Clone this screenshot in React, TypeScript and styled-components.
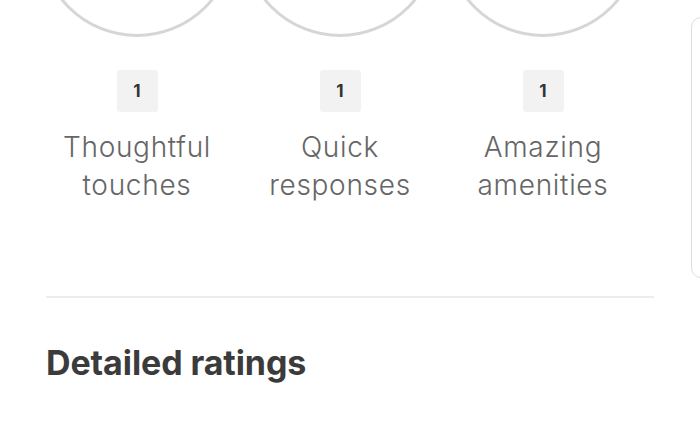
import React from 'react'
import styled, { createGlobalStyle } from 'styled-components'

const GlobalStyle = createGlobalStyle`
  html, body {
    margin: 0;
    padding: 0;
    background: #fff;
    overflow: hidden;
  }
  body {
    font-family: Inter, 'Noto Sans', sans-serif;
  }
`

const Page = styled.div`
  display: flex;
  align-items: flex-start;
  width: 700px;
  height: 437px;
  overflow: hidden;
`

const Main = styled.main`
  width: 608px;
  margin-left: 46px;
  flex-shrink: 0;
`

const Highlights = styled.div`
  display: grid;
  grid-template-columns: repeat(3, 203px);
  margin: -159px 0 0 -10.5px;
`

const Highlight = styled.div`
  display: flex;
  flex-direction: column;
  align-items: center;
`

const Circle = styled.div`
  width: 190px;
  height: 190px;
  border: 3px solid #d6d6d6;
  border-radius: 50%;
  display: flex;
  align-items: flex-end;
  justify-content: center;
  box-sizing: content-box;
  overflow: hidden;
`

const IconTip = styled.div`
  width: 12px;
  height: 4px;
  margin-bottom: 34px;
  border-radius: 0 0 6px 6px;
  background: #222;
`

const Badge = styled.div`
  margin-top: 33px;
  width: 41px;
  height: 42px;
  border-radius: 3px;
  background: #f2f2f2;
  display: flex;
  align-items: center;
  justify-content: center;
  font: 700 17px/1 Inter, sans-serif;
  color: #333;
`

const Label = styled.div`
  margin-top: 16px;
  text-align: center;
  font: 300 28px/38px Inter, 'Noto Sans', sans-serif;
  letter-spacing: 0.7px;
  color: #666;
`

const Divider = styled.hr`
  margin: 92px 0 0;
  border: none;
  border-top: 2px solid #ececec;
`

const Heading = styled.h2`
  margin: 44px 0 0;
  font: 700 34px/42px Inter, sans-serif;
  letter-spacing: -0.1px;
  color: #3b3b3b;
`

const Sidebar = styled.aside`
  flex-shrink: 0;
  width: 300px;
  height: 259px;
  margin: 17px 0 0 37px;
  border: 1px solid #dddddd;
  border-radius: 10px;
`

const items = [
  { count: 1, label: ['Thoughtful', 'touches'], icon: true },
  { count: 1, label: ['Quick', 'responses'], icon: false },
  { count: 1, label: ['Amazing', 'amenities'], icon: false },
]

export default function App() {
  return (
    <>
      <GlobalStyle />
      <Page>
        <Main>
          <Highlights>
            {items.map((it) => (
              <Highlight key={it.label[0]}>
                <Circle>{it.icon && <IconTip />}</Circle>
                <Badge>{it.count}</Badge>
                <Label>
                  {it.label[0]}
                  <br />
                  {it.label[1]}
                </Label>
              </Highlight>
            ))}
          </Highlights>
          <Divider />
          <Heading>Detailed ratings</Heading>
        </Main>
        <Sidebar />
      </Page>
    </>
  )
}
